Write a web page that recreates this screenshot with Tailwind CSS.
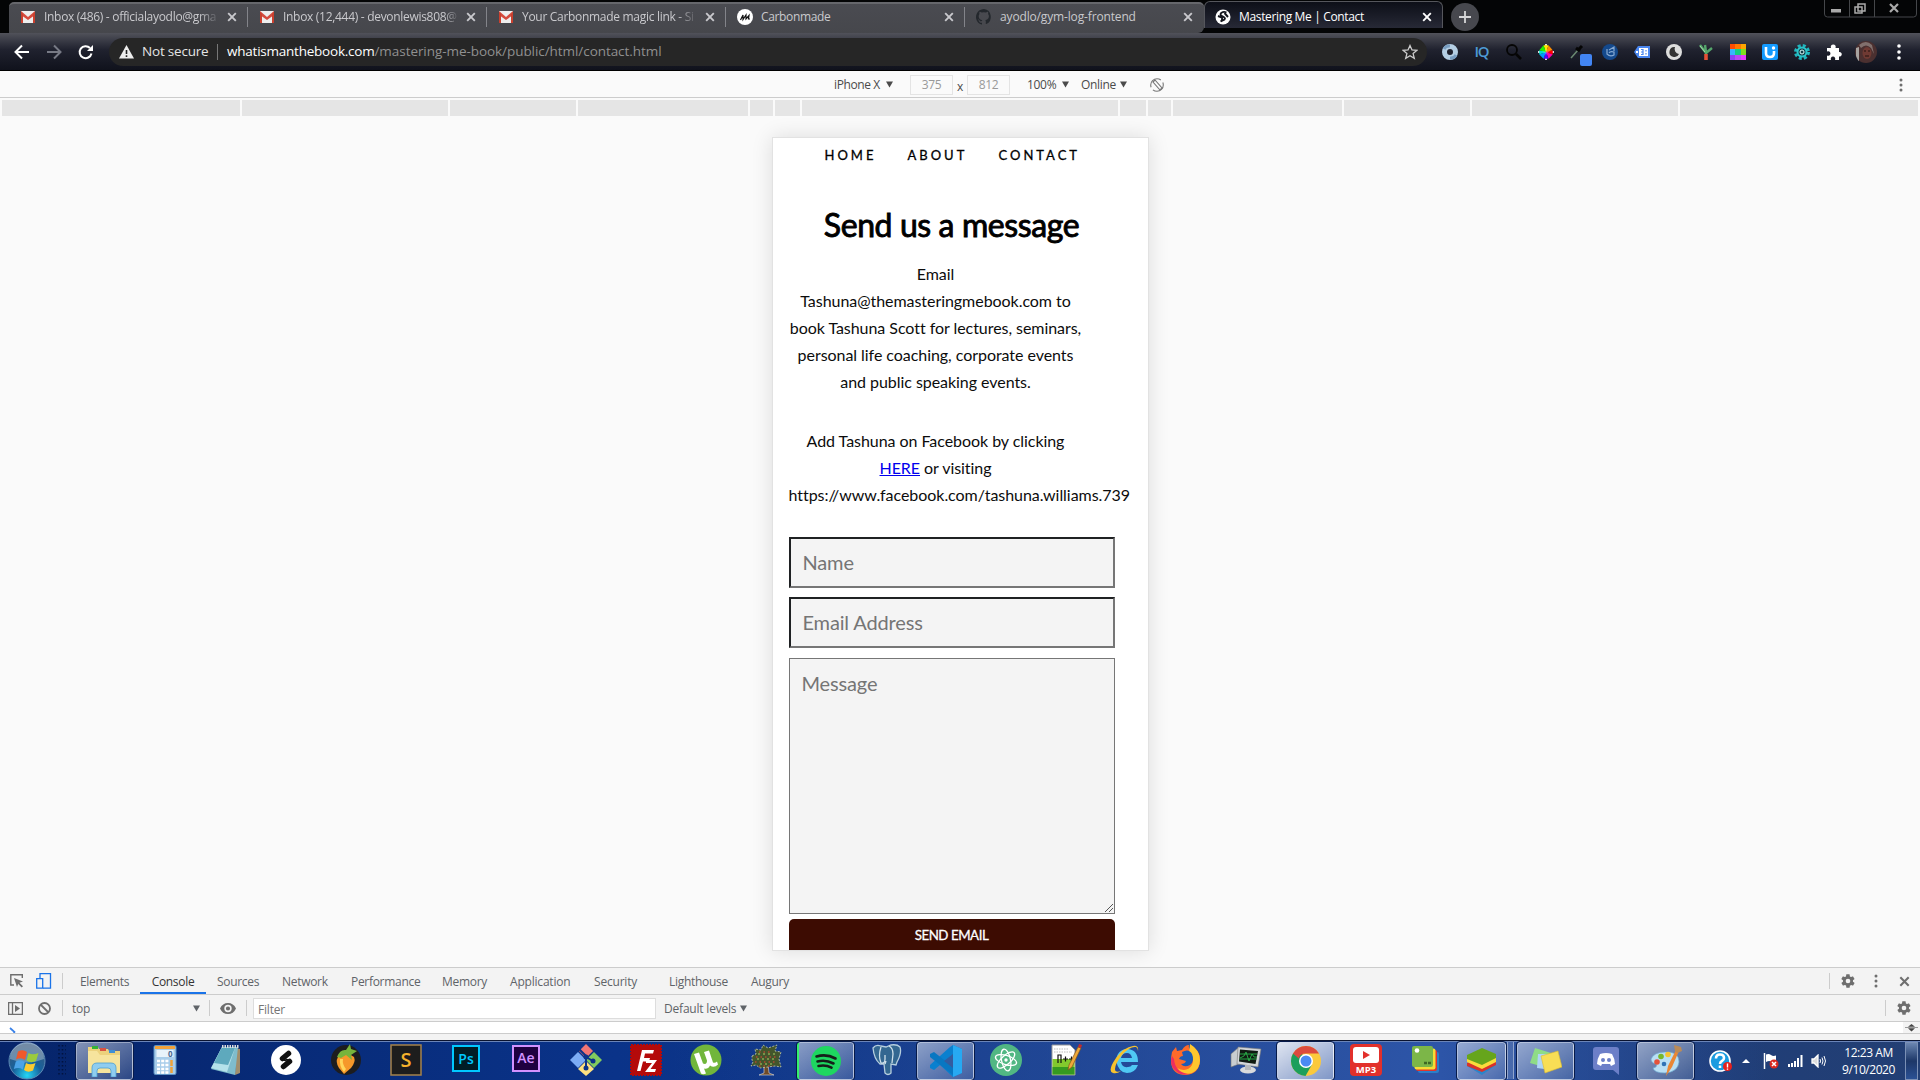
<!DOCTYPE html>
<html lang="en">
<head>
<meta charset="utf-8">
<title>Mastering Me | Contact</title>
<script src="https://cdn.jsdelivr.net/npm/@tailwindcss/browser@4"></script>
</head>
<body class="w-[1920px] h-[1080px] overflow-hidden flex flex-col bg-[#fafafa] font-['Open_Sans',sans-serif] text-xs">

<svg class="hidden">
  <defs>
    <symbol id="gmail" viewBox="0 0 16 16"><path d="M1 2h14v12H1z" fill="#eee"/><path d="M1 2l7 6 7-6v4l-7 5-7-5z" fill="#d54b3d"/><path d="M1 3v11h2V5zM15 3v11h-2V5z" fill="#c9402f"/></symbol>
    <symbol id="x" viewBox="0 0 10 10"><path d="M1.2 1.2l7.6 7.6M8.8 1.2L1.200 8.800" stroke="currentColor" stroke-width="1.900"/></symbol>
    <symbol id="gear" viewBox="0 0 24 24"><path fill="#6e6e6e" d="M19.400 13c.1-.3.1-.7.1-1s0-.7-.1-1l2.100-1.600c.2-.2.300-.4.100-.7l-2-3.400c-.1-.2-.4-.3-.6-.2l-2.500 1c-.5-.4-1.100-.7-1.700-1L14.400 2.400c0-.2-.2-.4-.5-.4h-4c-.2 0-.4.200-.5.4L9 5.100c-.6.200-1.200.6-1.700 1l-2.500-1c-.2-.1-.5 0-.6.2l-2 3.400c-.1.200-.1.500.1.700L4.500 11c0 .3-.1.700-.1 1s0 .7.1 1l-2.100 1.600c-.2.200-.3.400-.1.700l2 3.400c.1.200.4.300.6.200l2.500-1c.5.400 1.100.7 1.700 1l.4 2.700c0 .2.200.4.500.4h4c.2 0 .4-.2.500-.4l.4-2.700c.6-.2 1.200-.6 1.700-1l2.500 1c.2.1.5 0 .6-.2l2-3.400c.1-.2.1-.5-.1-.7zM12 15.500a3.500 3.500 0 110-7 3.500 3.500 0 010 7z"/></symbol>
    <symbol id="dots" viewBox="0 0 4 14"><circle cx="2" cy="2" r="1.500" fill="currentColor"/><circle cx="2" cy="7" r="1.500" fill="currentColor"/><circle cx="2" cy="12" r="1.500" fill="currentColor"/></symbol>
    <symbol id="tri" viewBox="0 0 8 7"><path d="M0 0h8L4 7z" fill="currentColor"/></symbol>
  </defs>
</svg>

<!-- Tab strip -->
<div class="relative h-[33px] shrink-0 flex bg-[#040506] pl-[9px] pt-[2px] text-[#c9c9cd] tracking-[-0.3px]">
  <div class="flex h-[31px] w-[1195px] rounded-t-[5px] rounded-br-[6px] border-t-2 border-[#66676c] bg-linear-to-b from-[#4a4b51] to-[#46474c] relative">
    <div class="w-[239px] flex items-center pl-[11px] pb-[3px] relative">
      <svg class="size-4 mr-[8px]"><use href="#gmail"/></svg>
      <span class="w-[176px] whitespace-nowrap mask-r-from-88%">Inbox (486) - officialayodlo@gma</span>
      <svg class="size-[10px] ml-[7px] shrink-0"><use href="#x"/></svg>
      <i class="absolute right-0 top-[3px] h-5 w-px bg-[#83848a]"></i>
    </div>
    <div class="w-[239px] flex items-center pl-[11px] pb-[3px] relative">
      <svg class="size-4 mr-[8px]"><use href="#gmail"/></svg>
      <span class="w-[176px] whitespace-nowrap mask-r-from-92%">Inbox (12,444) - devonlewis808@</span>
      <svg class="size-[10px] ml-[7px] shrink-0"><use href="#x"/></svg>
      <i class="absolute right-0 top-[3px] h-5 w-px bg-[#83848a]"></i>
    </div>
    <div class="w-[239px] flex items-center pl-[11px] pb-[3px] relative">
      <svg class="size-4 mr-[8px]"><use href="#gmail"/></svg>
      <span class="w-[176px] whitespace-nowrap mask-r-from-88%">Your Carbonmade magic link - Si</span>
      <svg class="size-[10px] ml-[7px] shrink-0"><use href="#x"/></svg>
      <i class="absolute right-0 top-[3px] h-5 w-px bg-[#83848a]"></i>
    </div>
    <div class="w-[239px] flex items-center pl-[11px] pb-[3px] relative tracking-[-0.35px]">
      <svg class="size-4 mr-[8px]" viewBox="0 0 16 16"><circle cx="8" cy="8" r="8" fill="#fff"/><path d="M3.500 11l2.500-5v4.500L9 6v4l3-3.500-.5 3.500h1.500" fill="none" stroke="#111" stroke-width="1.200"/></svg>
      <span class="w-[176px] whitespace-nowrap">Carbonmade</span>
      <svg class="size-[10px] ml-[7px] shrink-0"><use href="#x"/></svg>
      <i class="absolute right-0 top-[3px] h-5 w-px bg-[#83848a]"></i>
    </div>
    <div class="w-[239px] flex items-center pl-[11px] pb-[3px] relative tracking-[-0.15px]">
      <svg class="size-4 mr-[8px]" viewBox="0 0 16 16"><path fill="#24282d" d="M8 0C3.600 0 0 3.600 0 8c0 3.500 2.300 6.500 5.500 7.600.4.100.5-.2.500-.4v-1.500c-2 .4-2.700-.9-2.900-1.500-.1-.3-.5-.9-.8-1.100-.300-.2-.700-.5 0-.5.600 0 1.100.6 1.200.8.700 1.200 1.900.9 2.300.7.100-.5.300-.9.500-1.100-1.800-.2-3.600-.9-3.600-4 0-.9.300-1.600.8-2.100-.1-.2-.4-1 .1-2.100 0 0 .7-.2 2.200.8a7.500 7.500 0 014 0c1.500-1 2.200-.8 2.200-.8.400 1.100.2 1.900.1 2.100.5.600.8 1.300.8 2.100 0 3.100-1.900 3.800-3.700 4 .3.300.6.700.6 1.500v2.200c0 .2.100.5.500.4A8 8 0 008 0z"/></svg>
      <span class="w-[176px] whitespace-nowrap">ayodlo/gym-log-frontend</span>
      <svg class="size-[10px] ml-[7px] shrink-0"><use href="#x"/></svg>
    </div>
  </div>
  <div class="-mt-[1px] h-[27px] w-[239px] rounded-t-[6px] border border-b-0 border-[#55565c] bg-linear-to-b from-[#0d0f18] to-[#272936] flex items-center pl-[10px] pt-[3px] text-white tracking-[-0.35px]">
    <svg class="size-4 mr-[8px]" viewBox="0 0 16 16"><circle cx="8" cy="8" r="7.500" fill="#fff"/><path d="M11.500 3.500C9 2.300 6 3 5.500 5.200c-.4 2 4.500 2.200 4.500 4.300 0 1.800-3 2-4.500 3M3 7l4 1.500v4M9.500 4l3.500 4" fill="none" stroke="#15171f" stroke-width="1.900"/></svg>
    <span class="w-[176px] whitespace-nowrap">Mastering Me | Contact</span>
    <svg class="size-[10px] ml-[7px] shrink-0"><use href="#x"/></svg>
  </div>
  <svg class="size-7 ml-[8px] mt-[1px]" viewBox="0 0 28 28"><circle cx="14" cy="14" r="14" fill="#47484e"/><path d="M14 8v12M8 14h12" stroke="#d6d6d8" stroke-width="1.800"/></svg>
  <svg class="ml-auto mr-[3px] -mt-[2px] w-[93px] h-[18px]" viewBox="0 0 93 18"><path d="M.5 0v14q0 3 3 3h86q3 0 3-3V0M25.500 0v17M50.500 0v17" fill="none" stroke="#45474a"/><path d="M7 9h10v3.500H7z" fill="#aaa"/><path d="M34 4h7v7h-7zM31 7h7v6h-7z" fill="none" stroke="#aaa" stroke-width="1.500"/><path d="M66 4l8 8M74 4l-8 8" stroke="#aaa" stroke-width="2.200"/></svg>
</div>

<!-- Toolbar -->
<div class="h-[38px] shrink-0 flex items-center bg-linear-to-b from-[#51525a] via-[#20222f] via-45% to-[#10121c] border-b border-black pl-[14px]">
  <svg class="w-[80px] h-4" viewBox="0 0 80 16" fill="none" stroke-width="2"><path d="M15 8H2M8 1.500L1.500 8 8 14.500" stroke="#fff"/><path d="M33 8h13M40 1.500L46.500 8 40 14.500" stroke="#777a85"/><path d="M77.500 9.500A6 6 0 1 1 76 4" stroke="#fff"/><path d="M79 1v6h-6z" fill="#fff"/></svg>
  <div class="ml-[15px] h-7 w-[1318px] rounded-full bg-[#262626] flex items-center pl-[10px] pt-px text-sm tracking-[-0.35px] whitespace-nowrap text-[#e4e4e4]">
    <svg class="w-[15px] h-[14px]" viewBox="0 0 15 14"><path d="M7.500 0L15 13.500H0z" fill="#eee"/><path d="M7.500 5v4M7.500 10.300v1.700" stroke="#222" stroke-width="1.600"/></svg>
    <span class="ml-[8px] w-[67px] text-[13.500px] tracking-[-0.2px]">Not secure</span>
    <i class="ml-[8px] mr-[9px] w-px h-4 bg-[#777]"></i>
    <span class="text-[13.500px] tracking-[-0.06px] text-[#909090]"><b class="font-normal text-white tracking-[-0.23px]">whatismanthebook.com</b>/mastering-me-book/public/html/contact.html</span>
    <svg class="ml-auto mr-[9px] size-4" viewBox="0 0 16 16"><path d="M8 1.500l2 4.500 4.800.4-3.700 3.200 1.200 4.700L8 11.800l-4.300 2.500 1.200-4.700L1.200 6.400 6 6z" fill="none" stroke="#ccc" stroke-width="1.300"/></svg>
  </div>
  <div class="flex ml-[7px] [&>svg]:size-8 [&>svg]:shrink-0">
    <svg viewBox="-16 -16 32 32"><circle r="5.500" fill="none" stroke="#b5cfe4" stroke-width="5"/><path d="M-6-3A6 6 0 010-6M6 3a6 6 0 01-6 3" fill="none" stroke="#789dc1" stroke-width="3"/></svg>
    <svg viewBox="-16 -16 32 32"><text x="0" y="5" text-anchor="middle" font-family="Open Sans" font-size="15" font-weight="600" fill="#4d9bd5" textLength="15">IQ</text></svg>
    <svg viewBox="-16 -16 32 32"><circle cx="-2" cy="-2" r="5" fill="none" stroke="#050505" stroke-width="1.800"/><path d="M2 2l5 5" stroke="#050505" stroke-width="2.600"/></svg>
    <svg viewBox="-16 -16 32 32"><path d="M-8 0h16M0-8v16" stroke="#ddd" stroke-width="2"/><g transform="scale(.84)"><path d="M0 0L-3-8H3z" fill="#ffe600"/><path d="M0 0L3-8L8-2z" fill="#ff8c00"/><path d="M0 0L8-2V3z" fill="#f00"/><path d="M0 0L8 3L3 8z" fill="#f0a"/><path d="M0 0L3 8H-3z" fill="#50f"/><path d="M0 0L-3 8L-8 3z" fill="#09f"/><path d="M0 0L-8 3V-2z" fill="#0dc"/><path d="M0 0L-8-2L-3-8z" fill="#2e0"/></g></svg>
    <svg viewBox="-16 -16 32 32"><path d="M-7 6L0-2" stroke="#6b8a72" stroke-width="1.500"/><path d="M-2-4l4 3M0-2l4-4" stroke="#050505" stroke-width="3"/><rect x="2" y="2" width="12" height="12" rx="2" fill="#4285f4"/></svg>
    <svg viewBox="-16 -16 32 32"><circle r="8" fill="#14498c"/><path d="M-3-3v5q3 3 7 1v-3q-4-1-5 1M-1-2l5-3v4" fill="none" stroke="#86a9d2" stroke-width="1.200"/></svg>
    <svg viewBox="-16 -16 32 32"><path d="M-8 0l4-6H8V6H-4z" fill="#4a86ee"/><path d="M-3-4h9v8h-9zM-6-1h2v2h-2z" fill="#fff"/><path d="M-1-2.500h2v5h-2M-1 0h2M4-2v1.500M4 1v1.500" fill="none" stroke="#4a86ee" stroke-width="1.200"/></svg>
    <svg viewBox="-16 -16 32 32"><circle r="8" fill="#ddd"/><path d="M1-5A5 5 0 105 2 5 5 0 011-5z" fill="#333"/></svg>
    <svg viewBox="-16 -16 32 32"><path d="M-6-7l6 8v7M6-4L0 1M-1-7l1 7" fill="none" stroke="#54a66b" stroke-width="2.400"/><path d="M-6-6l5 6" stroke="#a9d7aa"/><path d="M0 2v6" stroke="#e74f35" stroke-width="3.500"/></svg>
    <svg viewBox="-16 -16 32 32"><path d="M-8-8H8v5H-8z" fill="#ff7800"/><path d="M-8-8h5v5h-5z" fill="#ff4b00"/><path d="M3-8h5v5H3z" fill="#ffa500"/><path d="M-8-3h5v6h-5z" fill="#38b6ff"/><path d="M-3-3h6v6h-6z" fill="#16cf82"/><path d="M3-3h5v6H3z" fill="#82df20"/><path d="M-8 3h5v5h-5z" fill="#8a44f4"/><path d="M-3 3h6v5h-6z" fill="#b84df2"/><path d="M3 3h5v5H3z" fill="#e83bff"/></svg>
    <svg viewBox="-16 -16 32 32"><rect x="-8" y="-8" width="16" height="16" rx="2" fill="#149bff"/><path d="M-4-5v6q0 4 4 4t4-4V-1" fill="none" stroke="#fff" stroke-width="2.600"/><circle cx="3.500" cy="-4" r="1.700" fill="#fff"/></svg>
    <svg viewBox="-16 -16 32 32"><circle r="6.500" fill="none" stroke="#20b5bd" stroke-width="3" stroke-dasharray="3 2.100"/><circle r="4.500" fill="#123c45" stroke="#2bc4c9" stroke-width="2"/><circle r="2" fill="none" stroke="#dff"/></svg>
    <svg viewBox="-16 -16 32 32"><path fill="#fff" d="M-7-4h4a2.500 2.500 0 114.500 0H5v4a2.300 2.300 0 110 4.500V8H1a2.300 2.300 0 10-4 0h-4V3.500a2.300 2.300 0 100-4z"/></svg>
    <svg viewBox="-16 -16 32 32"><circle r="11" fill="#4b3030"/><path d="M-7-7q7-6 13 0l2 9-3-6q-5-5-10 0z" fill="#81706d"/><ellipse cx="1" cy="1" rx="4.500" ry="6" fill="#6f3a33"/><path d="M-10-4v8q2 5 3 5V-5z" fill="#a7a3a0"/><path d="M-2-1h2M2-1h2M-1 4h4" stroke="#22100f"/></svg>
    <svg viewBox="-16 -16 32 32" fill="#fff"><circle cx="1" cy="-6" r="1.800"/><circle cx="1" r="1.800"/><circle cx="1" cy="6" r="1.800"/></svg>
  </div>
</div>

<!-- Device toolbar -->
<div class="h-[27px] shrink-0 flex items-center border-b border-[#ccc] bg-[#fafafa] pl-[834px] pt-px text-[#4a4a4a] whitespace-nowrap tracking-[-0.3px]">
  <span class="w-[52px] tracking-[-0.4px]">iPhone X</span><svg class="w-[7px] h-[7px]"><use href="#tri"/></svg>
  <span class="ml-[17px] w-[43px] h-5 border border-[#e4e4e4] text-center leading-[18px] text-[#999]">375</span>
  <span class="w-[14px] text-center pt-1">x</span>
  <span class="w-[43px] h-5 border border-[#e4e4e4] text-center leading-[18px] text-[#999]">812</span>
  <span class="ml-[17px] w-[35px]">100%</span><svg class="w-[7px] h-[7px]"><use href="#tri"/></svg>
  <span class="ml-[12px] w-[39px]">Online</span><svg class="w-[7px] h-[7px]"><use href="#tri"/></svg>
  <svg class="ml-[23px] size-[14px]" viewBox="0 0 14 14" fill="none" stroke="#777" stroke-width="1.100"><circle cx="7" cy="7" r="6.300" stroke-dasharray="14 3 16 3"/><path d="M3 4l2-2 7 8-2 2z"/></svg>
  <svg class="ml-auto mr-[17px] w-1 h-[14px] text-[#6e6e6e]"><use href="#dots"/></svg>
</div>

<!-- Viewport -->
<main class="h-[869px] shrink-0 flex flex-col items-center">
  <div class="w-full flex gap-[2px] px-[2px] pt-[2px] h-[18px] shrink-0 [&>i]:bg-[#e5e5e5] [&>i]:shrink-0">
    <i class="w-[238px]"></i><i class="w-[206px]"></i><i class="w-[126px]"></i><i class="w-[170px]"></i><i class="w-[23px]"></i><i class="w-[25px]"></i><i class="w-[316px]"></i><i class="w-[26px]"></i><i class="w-[23px]"></i><i class="w-[169px]"></i><i class="w-[126px]"></i><i class="w-[206px]"></i><i class="w-[238px]"></i>
  </div>
  <div class="mt-[21px] w-[377px] h-[814px] shrink-0 border border-[#e2e2e2] bg-white overflow-hidden shadow-[0_0_20px_rgba(0,0,0,0.12)] font-['Lato',sans-serif] text-black pl-4 [font-variant-ligatures:none]">
    <nav class="flex pl-[36px] pt-[8px] text-[13px] leading-[18px] tracking-[3px] [-webkit-text-stroke:0.3px_black]">
      <a class="w-[83px]">HOME</a><a class="w-[91px]">ABOUT</a><a>CONTACT</a>
    </nav>
    <h1 class="mt-[41px] w-[326px] text-center text-[32px] leading-[40px] tracking-[-0.4px] whitespace-nowrap [-webkit-text-stroke:0.9px_black]">Send us a message</h1>
    <p class="mt-[15px] w-[294px] text-center text-base leading-[27px] tracking-[-0.05px] text-[#0c0c0c]">Email<br>Tashuna@themasteringmebook.com to<br>book Tashuna Scott for lectures, seminars,<br>personal life coaching, corporate events<br>and public speaking events.</p>
    <p class="mt-[32px] w-[294px] text-center text-base leading-[27px] tracking-[-0.05px] text-[#0c0c0c]">Add Tashuna on Facebook by clicking<br><a class="text-[#0000ee] underline">HERE</a> or visiting<br><span class="block text-left whitespace-nowrap">https://www.facebook.com/tashuna.williams.739</span></p>
    <div class="mt-[29px] w-[326px] flex flex-col text-xl tracking-[-0.15px] text-[#757575]">
      <div class="h-[51px] border-2 border-t-[#1f2123] border-l-[#1f2123] border-r-[#767676] border-b-[#767676] bg-[#f4f4f4] pl-3 pb-[2px] flex items-center">Name</div>
      <div class="mt-[9px] h-[51px] border-2 border-t-[#1f2123] border-l-[#1f2123] border-r-[#767676] border-b-[#767676] bg-[#f4f4f4] pl-3 pb-[2px] flex items-center">Email Address</div>
      <div class="mt-[10px] h-[256px] border border-[#767676] bg-[#f4f4f4] pl-3 pt-[10px] leading-7 relative">Message
        <svg class="absolute right-px bottom-px size-2" viewBox="0 0 8 8"><path d="M0 8l8-8M4 8l4-4" stroke="#555"/></svg>
      </div>
      <div class="mt-[5px] h-[36px] rounded-[5px] bg-[#3d0c02] text-white text-center text-[13.300px] leading-[32px] tracking-[-0.45px] [-webkit-text-stroke:0.300px_white]">SEND EMAIL</div>
    </div>
  </div>
</main>

<!-- DevTools drawer -->
<div class="h-[28px] shrink-0 border-y border-[#ccc] bg-[#f3f3f3] flex items-center text-[#5f6368] tracking-[-0.3px] whitespace-nowrap [&>span]:pt-px">
  <svg class="ml-[10px] w-[14px] h-[14px]" viewBox="0 0 14 14"><path d="M4 11H.8V.8h11.500V4" fill="none" stroke="#6e6e6e" stroke-width="1.400"/><path d="M4 4l9 3.500-3.500 1.300 3.500 3.500-1.300 1.300-3.500-3.500L7 13z" fill="#6e6e6e"/></svg>
  <svg class="ml-[12px] w-4 h-4" viewBox="0 0 16 16" fill="none" stroke="#1a73e8" stroke-width="1.300"><path d="M4 5V.7h10.500v14.500H7"/><path d="M.7 5.700h6v9.500h-6z"/></svg>
  <i class="ml-[10px] w-px h-4 bg-[#ccc] mr-[17px]"></i>
  <span class="w-[60px]">Elements</span>
  <span class="h-[26px] w-[66px] border-b-2 border-[#1a73e8] text-center leading-[25px] text-[#333]">Console</span>
  <span class="ml-[11px] w-[65px]">Sources</span><span class="w-[69px]">Network</span><span class="w-[91px]">Performance</span><span class="w-[68px]">Memory</span><span class="w-[84px] tracking-[-0.2px]">Application</span><span class="w-[75px] tracking-[-0.2px]">Security</span><span class="w-[82px]">Lighthouse</span><span>Augury</span>
  <i class="ml-auto w-px h-4 bg-[#ccc]"></i>
  <svg class="ml-[10px] size-4"><use href="#gear"/></svg>
  <svg class="ml-[18px] w-1 h-[14px] text-[#6e6e6e]"><use href="#dots"/></svg>
  <svg class="ml-[21px] mr-[10px] size-[11px] text-[#6e6e6e]"><use href="#x"/></svg>
</div>
<div class="h-[27px] shrink-0 border-b border-[#ccc] bg-[#f3f3f3] flex items-center text-[#5f6368] tracking-[-0.2px] whitespace-nowrap">
  <svg class="ml-2 w-[15px] h-[13px]" viewBox="0 0 15 13"><path d="M.6.600h13.800v11.800H.6zM4.500.6v11.800" fill="none" stroke="#6e6e6e" stroke-width="1.300"/><path d="M7 3l5 3.500L7 10z" fill="#6e6e6e"/></svg>
  <svg class="ml-[15px] size-[13px]" viewBox="0 0 13 13"><circle cx="6.500" cy="6.500" r="5.500" fill="none" stroke="#6e6e6e" stroke-width="1.800"/><path d="M2.500 2.500l8 8" stroke="#6e6e6e" stroke-width="1.800"/></svg>
  <i class="ml-[11px] w-px h-4 bg-[#ccc]"></i>
  <span class="ml-[9px] w-[121px] pt-px">top</span><svg class="w-[7px] h-[7px]"><use href="#tri"/></svg>
  <i class="ml-[9px] w-px h-4 bg-[#ccc]"></i>
  <svg class="ml-[10px] w-4 h-[11px]" viewBox="0 0 16 11"><path fill-rule="evenodd" fill="#6e6e6e" d="M8 0q5.500 0 8 5.500Q13.500 11 8 11T0 5.500Q2.500 0 8 0zm0 1.800a3.700 3.700 0 100 7.400 3.700 3.700 0 000-7.400zm0 1.600a2.100 2.100 0 110 4.200 2.100 2.100 0 010-4.200z"/></svg>
  <i class="ml-[10px] w-px h-4 bg-[#ccc]"></i>
  <span class="ml-[6px] w-[403px] h-[21px] bg-white border border-[#ddd] pl-[4px] pt-px leading-5 text-[#757575] tracking-0">Filter</span>
  <span class="ml-[8px] w-[76px] pt-px">Default levels</span><svg class="w-[7px] h-[7px]"><use href="#tri"/></svg>
  <i class="ml-auto w-px h-4 bg-[#ccc]"></i>
  <svg class="ml-[10px] mr-2 size-4"><use href="#gear"/></svg>
</div>
<div class="h-[12px] shrink-0 border-b border-[#ccc] bg-white flex justify-between">
  <svg class="ml-[9px] mt-[5px] w-[7px] h-[6px]" viewBox="0 0 7 6"><path d="M1 1l4.500 4L4.500 7" fill="none" stroke="#3b82e8" stroke-width="1.700"/></svg>
  <svg class="w-[17px] h-[11px]" viewBox="0 0 17 11"><path d="M0 0h17v11H0z" fill="#f3f3f3"/><path d="M2 5.500h13" stroke="#999"/><path d="M5 4.800L8.500 2 12 4.800zM5 6.200L8.500 9.500 12 6.200z" fill="#444"/></svg>
</div>
<div class="h-[6px] shrink-0 bg-[#f3f3f3]"></div>

<!-- Taskbar -->
<footer class="h-10 shrink-0 flex items-center border-t border-[#0b1430] bg-linear-to-r from-[#06246a] via-[#0a3389] via-32% to-[#233f74] relative">
  <div class="absolute inset-0 bg-linear-to-r from-transparent from-35% via-[#2d55a8] via-75% to-transparent to-92%"></div>
  <div class="absolute inset-x-0 top-0 h-px bg-[#6a84b8]"></div>
  <div class="relative flex items-center h-full w-full">
  <svg class="ml-[8px] size-[38px] shrink-0" viewBox="0 0 38 38">
    <defs><radialGradient id="orb" cx=".5" cy=".9" r=".8"><stop offset="0" stop-color="#25d6f5"/><stop offset=".5" stop-color="#17619c"/><stop offset="1" stop-color="#375a80"/></radialGradient></defs>
    <circle cx="19" cy="19" r="18" fill="url(#orb)" stroke="#5d8ab5"/><path d="M2 17A17 17 0 0136 17Q19 24 2 17z" fill="#fff" opacity=".3"/>
    <path d="M10 9.500q5-2.500 9 .5l-2 8q-4-3-9-.5z" fill="#f0592b"/><path d="M20.500 11q4 2.500 10 0l-2.500 8q-5 2.500-9.500-.5z" fill="#9bcb3c"/><path d="M7.800 19.500q5-2.500 9 .5l-2 7.500q-4-2.500-9-.5z" fill="#4ba3e8"/><path d="M18 21q4 2.500 9.500 0L25 28.500q-5 2.500-9-.5z" fill="#fccb30"/></svg>
  <svg class="ml-[12px] w-[8px] h-[31px] shrink-0" viewBox="0 0 8 31"><path d="M1 0v31M4.500 0v31M8 0v31" stroke="#02133f" stroke-width="1.500" stroke-dasharray="1.500 2.500"/></svg>

  <div class="ml-[9.500px] flex shrink-0 [&>div]:w-[60px] [&>div]:h-[39px] [&>div]:flex [&>div]:items-center [&>div]:justify-center [&>div>svg]:-mt-px [&_svg]:size-8 [&_b]:flex [&_b]:items-center [&_b]:justify-center [&_b]:w-[57px] [&_b]:h-[38px] [&_b]:rounded-[3px] [&_b]:border [&_b]:border-white/50 [&_b]:bg-linear-to-br [&_b]:from-white/50 [&_b]:to-white/15 [&_b]:outline [&_b]:outline-[#061a4a]">
    <div><b class="-ml-[3px]"><svg viewBox="0 0 32 32"><path d="M0 2h10l1 2h9l1 2h11v22H0z" fill="#ecd27c"/><path d="M4 1h6v3H4z" fill="#35b336"/><path d="M12 3h6v3h-6z" fill="#d85342"/><path d="M21 5h6v3h-6z" fill="#3f8fd6"/><path d="M0 6h9l3 4h20v18H0z" fill="#f6e49d"/><path d="M4 32v-9q0-5 5-5h14q5 0 5 5v9h-5v-6q0-3-3-3h-8q-3 0-3 3v6z" fill="#8fcdf0" stroke="#4c9ed1" stroke-width=".8"/></svg></b></div>
    <div><svg class="-ml-[2px]" viewBox="0 0 32 32"><rect x="5" y="1.500" width="22" height="29" rx="1.500" fill="#a8cdea" stroke="#5d92c4"/><path d="M6 2h20v3H6z" fill="#f2a23b"/><path d="M7.500 6h17v7h-17z" fill="#e8f3fb"/><text x="19" y="12.500" font-size="8" font-family="Open Sans" font-weight="700" fill="#49698f">0</text><path d="M8 17h12M8 21h12M8 25h12M8 28.500h12" stroke="#fff" stroke-width="2.600" stroke-dasharray="3 1.200"/><path d="M22.500 16v6M22.500 23v6" stroke="#efa33a" stroke-width="2.500"/></svg></div>
    <div><svg viewBox="0 0 32 32"><path d="M26 4l4 1v24l-5 2z" fill="#a08e6d"/><path d="M12 3h16l-3 28-24-6z" fill="#7fbccc"/><path d="M12 3L1 24l16 4L25 4z" fill="#b5e2ea"/><path d="M12 3L4 19l14 2L25 4z" fill="#5ea9bd"/><path d="M12 2.500h17" stroke="#ddd" stroke-width="3" stroke-dasharray="1.500 1"/></svg></div>
    <div><svg viewBox="0 0 32 32"><circle cx="16" cy="16" r="15" fill="#fff"/><path d="M12.500 14.500l6-5M13.500 22.500l6-5" stroke="#111" stroke-width="5.500" stroke-linecap="round"/><path d="M12 15l4 1.500M16 15.500l4 1.500" stroke="#111" stroke-width="2"/></svg></div>
    <div><svg viewBox="0 0 32 32"><circle cx="16" cy="16" r="15" fill="#1d1d1f"/><path d="M8 13q8-7 16 0 2 5-3 11l-7 6-5-6q-4-6-1-11z" fill="#f6982a"/><path d="M10 15q-1 7 4 13l2-3q-4-5-3-10z" fill="#ffd65a"/><path d="M7 13q3-8 9-7l4-6 1 5 6 2-6 4 1 5-6-5-5 3z" fill="#76b43c"/></svg></div>
    <div><svg viewBox="0 0 32 32"><rect x="1" y="1" width="30" height="30" fill="#1d1d1d" stroke="#a5834c" stroke-width="1.500"/><text x="16" y="23" text-anchor="middle" font-size="20" font-weight="600" font-family="Open Sans" fill="#f6b32c">S</text></svg></div>
    <div><svg viewBox="0 0 32 32"><rect x="3" y="2" width="26" height="25" fill="#001d26" stroke="#00c8ff" stroke-width="2"/><text x="16" y="20" text-anchor="middle" font-size="14" font-weight="600" font-family="Open Sans" fill="#00c8ff">Ps</text></svg></div>
    <div><svg viewBox="0 0 32 32"><rect x="3" y="2" width="26" height="25" fill="#1f0040" stroke="#d291ff" stroke-width="2"/><text x="16" y="19" text-anchor="middle" font-size="14" font-weight="600" font-family="Open Sans" fill="#d291ff">Ae</text></svg></div>
    <div><svg viewBox="0 0 32 32"><path d="M16 0l7 7-7 7-7-7z" fill="#f07575"/><path d="M8 8l8 8-8 8-8-8z" fill="#7cacf5"/><path d="M24 8l8 8-8 8-8-8z" fill="#82cc5e"/><path d="M16 17l8 8-8 7-8-7z" fill="#fde080"/><path d="M9 5l7 7v13M16 13l7 4" stroke="#0b3388" stroke-width="2" fill="none"/><circle cx="16" cy="13" r="2.500" fill="#0b3388"/><circle cx="23" cy="17" r="2.500" fill="#0b3388"/><circle cx="16" cy="24" r="2.500" fill="#0b3388"/></svg></div>
    <div><svg viewBox="0 0 32 32"><rect x="1" y="1" width="30" height="30" fill="#b40a0a" stroke="#b40a0a" stroke-width="2" stroke-dasharray="2 1"/><path d="M7 27L12 6h12l-1 3.500h-8l-1 4.500h6l-1 3.500h-6L10.500 27z" fill="#fff"/><path d="M16 16h11l-6.500 9H26l-1 3H15l7-9h-6z" fill="#fff"/></svg></div>
    <div><svg viewBox="0 0 32 32"><circle cx="16" cy="16" r="15.500" fill="#71b63b"/><path d="M4 10l5-1.500 4 11q4 1.500 4-3l-3-8.500 5-1.500 4 12q2 1 4-1l1 3q-4 4-8 1-2 4-6 3l2 5q-3 1.500-5 0z" fill="#fff"/></svg></div>
    <div><svg viewBox="0 0 32 32"><path d="M14 20h4l1 9 5 2H9l5-2z" fill="#6f4a27" stroke="#ddd" stroke-width=".6"/><path d="M2 12l4-2-1-5 6 1 2-5 5 3 9-3-2 6 6 1-2 7 2 8-6-1-7 1-8 1-4-3-5 1 2-4-1-2z" fill="#43562c" stroke="#c9cfb4" stroke-width=".8" stroke-dasharray="2 1.500"/><path d="M6 13h20M5 18h22M9 8h13M9 22h14" stroke="#b14830" stroke-width="1.500" stroke-dasharray="1.500 3"/><path d="M8 10h18M7 15h20M10 20h14" stroke="#88a850" stroke-width="1.500" stroke-dasharray="2 3"/></svg></div>
    <div><b class="border-l-2! border-l-[#35f06c]!"><svg viewBox="0 0 32 32"><circle cx="16" cy="16" r="15" fill="#1ed760"/><path d="M6.500 11.500q10-3 19 2M7.500 16.500q8-2.300 16 2M8.500 21q7-1.700 13 1.700" fill="none" stroke="#161f1a" stroke-width="2.600" stroke-linecap="round"/></svg></b></div>
    <div><svg viewBox="0 0 32 32"><path d="M3 4q3-4 8-2l5 1 5-2q6-1 9 2 2 6-3 15l-1 3-5-1v9q-3 3-6 0l-1-9-4 0q-6-5-7-16z" fill="#336791" stroke="#b5cede" stroke-width="1.300"/><path d="M11 3q-3 9 0 16M19 2q4 2 4 8l-1 9M11 19q4 1 4-4v-4M15 20l1-3" fill="none" stroke="#d0e0ea" stroke-width="1.300"/></svg></div>
    <div><b><svg viewBox="0 0 32 32"><path d="M23 0l9 4v24l-9 4-13-12-6 5-4-2v-3l20-18z" fill="#0a80cf"/><path d="M23 0l9 4v24l-9 4z" fill="#27a9f2"/><path d="M0 9l4-2 19 15v8L0 12z" fill="#0877c2"/><path d="M23 9l-9 7 9 7z" fill="#345c9f"/></svg></b></div>
    <div><svg viewBox="0 0 32 32"><circle cx="16" cy="16" r="16" fill="#51b783"/><g fill="none" stroke="#fff" stroke-width="1.300" transform="rotate(-12 16 16)"><ellipse cx="16" cy="16" rx="4.500" ry="11"/><ellipse cx="16" cy="16" rx="4.500" ry="11" transform="rotate(60 16 16)"/><ellipse cx="16" cy="16" rx="4.500" ry="11" transform="rotate(120 16 16)"/></g><circle cx="16" cy="16" r="1.700" fill="#fff"/></svg></div>
    <div><svg viewBox="0 0 32 32"><path d="M2 1h18l5 5v25H2z" fill="#fff" stroke="#999"/><path d="M2.500 15h22v15.500h-22z" fill="#82c92d"/><path d="M2.500 23h22v7.500h-22z" fill="#359a20"/><path d="M4 5h15M4 8h18" stroke="#bbb" stroke-dasharray="1.500 1"/><path d="M8 19V11h3v8M13 15h5M15.500 12.500v5M19 15h5M21.500 12.500v5" fill="none" stroke="#111" stroke-width="1.200"/><path d="M18 26l1-5L28 3l3 1-9 19z" fill="#eda83a" stroke="#83531c" stroke-width=".7"/><path d="M28 3l1-3 3 1-1 3z" fill="#c22b2b"/></svg></div>
    <div><svg viewBox="0 0 32 32"><path d="M28 18H11q1 6 7 5 3 0 4-2h6q-3 8-11 8T6 17Q7 5 18 5q10 1 10 13zM11 14h11q-1-5-5-5-5 0-6 5z" fill="#4fc8f4" fill-rule="evenodd"/><path d="M28 7q1-6-5-5Q14 3 6 14-3 27 3 29q4 1 8-2-6 2-6-2 0-5 7-14 8-9 14-8 2 1 2 4z" fill="#f6c22e"/></svg></div>
    <div><svg viewBox="0 0 32 32"><path d="M2 8l4-5 1 4 5-1q3-5 7-5-1 3 2 5l1-4q9 6 8 15-1 13-14 14Q2 31 1 18q0-6 1-10z" fill="#ff6a2a"/><path d="M20 0q10 6 10 16 0 9-8 13-10 3-15-5 10 5 15-3 3-7-3-12z" fill="#ffc72e"/><path d="M12 8q7-4 10 2 3 7-2 11-6 3-9-1 4 0 5-3l-7-2q1-3 4-3z" fill="#1d5bb5"/><path d="M2 12q-3 10 4 15 5 5 12 3-13-2-14-15z" fill="#ed2e60"/></svg></div>
    <div><svg viewBox="0 0 32 32"><path d="M1 10l8-7v17l-8 3z" fill="#c9cdd0" stroke="#777" stroke-width=".6"/><path d="M8 3l23 2-3 18-21-3z" fill="#d3d6d9" stroke="#777" stroke-width=".6"/><path d="M10 5.500l18 1.500-2.500 13L9 17.500z" fill="#101a12"/><path d="M10 14l4-2 2-4 3 9 3-7 2 3h3M10 10h17M9.500 15h17" stroke="#29b34a" fill="none" stroke-width=".9"/><ellipse cx="18" cy="26" rx="8" ry="3.500" fill="#d8dadc"/><path d="M15 21h6v5h-6z" fill="#b6b9bc"/></svg></div>
    <div><b class="from-white/85! to-white/40!"><svg viewBox="0 0 32 32"><circle cx="16" cy="16" r="15" fill="#fbc93c"/><path d="M3 8.500a15 15 0 0012.500 22.500L22 19.500 16 16z" fill="#1c9f5c"/><path d="M3 8.500L10 20h8L12 9z" fill="#1c9f5c"/><path d="M3 8.500A15 15 0 0129 8.500H16q-6 0-7.200 5z" fill="#dc4b3e"/><circle cx="16" cy="16" r="7" fill="#fff"/><circle cx="16" cy="16" r="5.500" fill="#4a8af4"/></svg></b></div>
    <div><svg viewBox="0 0 32 32"><rect width="32" height="32" rx="4" fill="#e2302b"/><rect x="3" y="3" width="26" height="16" rx="3" fill="#fff"/><path d="M13 7l7 4-7 4z" fill="#e2302b"/><text x="16" y="29" text-anchor="middle" font-size="9.500" font-weight="700" font-family="Open Sans" fill="#fff">MP3</text></svg></div>
    <div><svg viewBox="0 0 32 32"><rect x="8" y="8" width="21" height="21" rx="2" fill="#2a7fc9"/><rect x="6" y="6" width="21" height="21" rx="2" fill="#e1352c"/><rect x="4.500" y="4.500" width="21" height="21" rx="2" fill="#f5dd35"/><rect x="2" y="2" width="21" height="21" rx="2" fill="#7cb648"/><circle cx="7" cy="6.500" r="2.300" fill="#fff"/><path d="M14 19h3M18 19h3" stroke="#3e6723" stroke-width="2.500"/></svg></div>
    <div class="relative"><b class="w-[49px]! -ml-[9px]"><svg viewBox="0 0 32 32"><path d="M2 21l15-7 14 6-14 10z" fill="#2b84ca"/><path d="M2 18l15-7 14 6v3L17 27 2 21z" fill="#d8322b"/><path d="M2 14l15-7 14 6v4L17 24 2 17z" fill="#fadb3c"/><path d="M2 10L17 3l14 6v4L17 20 2 14z" fill="#66a51c"/></svg></b><i class="absolute right-[2px] top-px w-[7px] h-[37px] border-r border-l border-white/40 bg-white/15"></i></div>
    <div><b><svg viewBox="0 0 32 32"><path d="M5 3l16 5-4 15L0 18z" fill="#8fdc86"/><path d="M8 9l15 0-1 16-15-2z" fill="#aed5f7"/><path d="M11 11l17-5 4 16-17 6z" fill="#f8de55" stroke="#d9b834" stroke-width=".6"/></svg></b></div>
    <div><svg viewBox="0 0 32 32"><path d="M3 6q0-3 3-3h20q3 0 3 3v25l-6-5H6q-3 0-3-3z" fill="#6c7fc8"/><path d="M10 10q6-2 12 0 3 5 3 10l-4 2-1-2h-8l-1 2-4-2q0-5 3-10z" fill="#fff"/><circle cx="13" cy="16" r="2" fill="#6c7fc8"/><circle cx="19" cy="16" r="2" fill="#6c7fc8"/></svg></div>
    <div><b><svg viewBox="0 0 32 32"><path d="M15 7q14-1 14 10-1 10-14 11-11 0-12-5 5-1 3-4-5-1-5-5 3-7 14-7z" fill="#b9dff4" stroke="#6ba8cf" stroke-width=".7"/><circle cx="7" cy="17" r="2.800" fill="#e4533b"/><circle cx="11" cy="11.500" r="2.800" fill="#77b82b"/><circle cx="18" cy="9.500" r="2.800" fill="#f6c432"/><circle cx="14" cy="19" r="2.300" fill="#3072b5"/><path d="M16 31l2-10 8-16 3 1-7 16z" fill="#e98735"/><path d="M25 6l-1-6 7 2 1 4-5 2z" fill="#bb8b57"/></svg></b></div>
  </div>

  <svg class="ml-[13px] w-[23px] h-[22px] shrink-0" viewBox="0 0 23 22"><circle cx="11" cy="11" r="10" fill="#1a9be0" stroke="#fff" stroke-width="1.600"/><path d="M7 8.500q0-4 4-4t4 3.500q0 2-2 3t-2 3M11 15.500V18" fill="none" stroke="#fff" stroke-width="2.600"/><circle cx="18.500" cy="16.500" r="4.500" fill="#e8201c"/><path d="M18.500 13.500v4M18.500 18.500v1.200" stroke="#fff" stroke-width="1.400"/></svg>
  <svg class="ml-[10px] w-[8px] h-[4px] shrink-0" viewBox="0 0 8 4"><path d="M0 4l4-4 4 4z" fill="#fff"/></svg>
  <svg class="ml-[13px] w-[16px] h-[16px] shrink-0" viewBox="0 0 16 16"><path d="M1.500 0v16" stroke="#fff" stroke-width="1.500"/><path d="M3 1.500q3-1 5 .5t5 .5v7q-3 0-5-1t-5 .5z" fill="#fff"/><circle cx="11" cy="11" r="4.500" fill="#d9281f"/><path d="M9 9l4 4M13 9l-4 4" stroke="#fff" stroke-width="1.500"/></svg>
  <svg class="ml-[9px] w-[15px] h-[12px] shrink-0" viewBox="0 0 15 12"><path d="M1 12V9M4 12V8M7 12V6M10 12V3M13.500 12V0" stroke="#fff" stroke-width="2"/></svg>
  <svg class="ml-[8px] w-[16px] h-[14px] shrink-0" viewBox="0 0 16 14"><path d="M1 5h2l4-4v12L3 9H1z" fill="#ddd" stroke="#fff" stroke-width="1.300"/><path d="M9 5q1 2 0 4M11 3.500q2 3.500 0 7M13 2q3 5 0 10" fill="none" stroke="#fff"/></svg>
  <div class="ml-[15px] w-[54px] shrink-0 text-center text-white text-xs leading-[17px] tracking-[-0.45px] whitespace-nowrap">12:23 AM<br>9/10/2020</div>
  <div class="ml-auto mr-[2px] w-[13px] h-[38px] shrink-0 border border-[#7b90b6] bg-linear-to-b from-[#6c86b1] via-[#1d3768] to-[#2b5195]"></div>
  </div>
</footer>
</body>
</html>
